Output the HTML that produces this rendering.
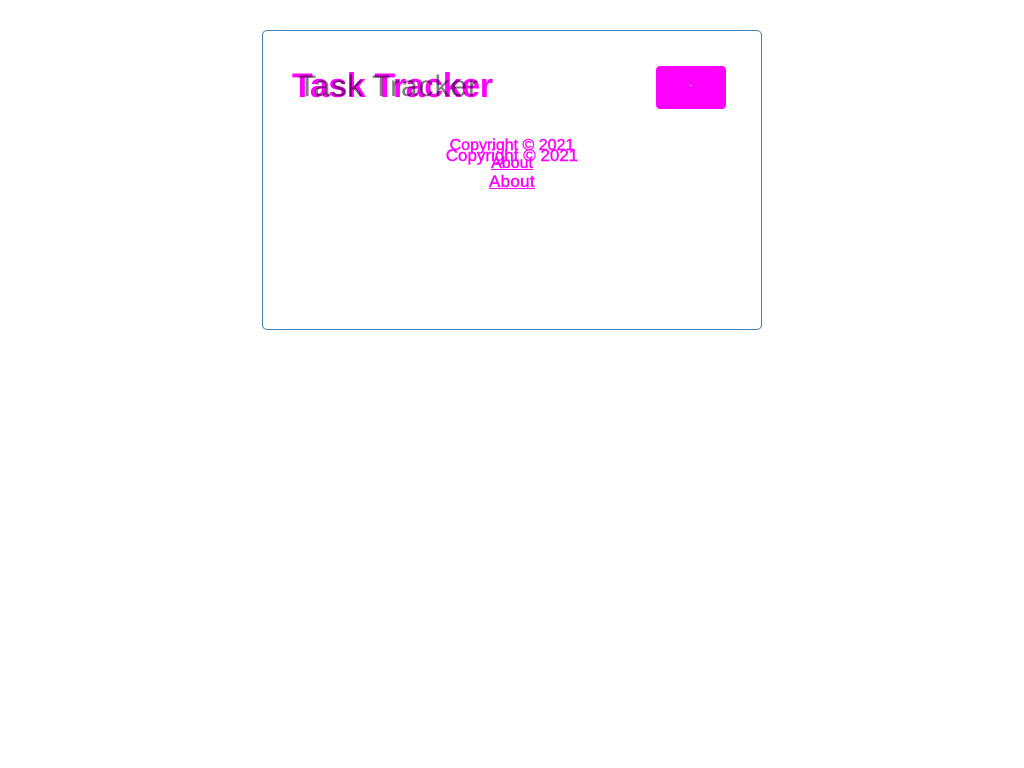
<!DOCTYPE html>
<html><head><style>
body{margin:0;background:#fff;font-family:"Liberation Sans",sans-serif;}
.card{position:absolute;left:262px;top:30px;width:498px;height:298px;border:1px solid steelblue;border-radius:5px;}
.t{position:absolute;white-space:nowrap;}
.c{left:0;width:1024px;text-align:center;color:#f0f;-webkit-text-stroke:0.4px #f0f;}
</style></head><body>
<div class="card"></div>
<div class="t" style="left:292px;top:67px;font-size:34px;font-weight:bold;color:#f0f;letter-spacing:-0.4px">Task Tracker</div>
<div class="t" style="left:298px;top:70px;font-size:30px;color:#000;opacity:.5;letter-spacing:0.9px">Task Tracker</div>
<div style="position:absolute;left:656px;top:66px;width:70px;height:43px;background:#f0f;border-radius:4px"></div>
<div class="t" style="left:689px;top:80px;font-size:10px;color:#fff">·</div>
<div class="t c" style="top:137px;font-size:16px">Copyright © 2021</div>
<div class="t c" style="top:146px;font-size:17px">Copyright © 2021</div>
<div class="t c" style="top:155px;font-size:16px;text-decoration:underline">About</div>
<div class="t c" style="top:172px;font-size:17px;text-decoration:underline;letter-spacing:0.3px">About</div>
</body></html>
